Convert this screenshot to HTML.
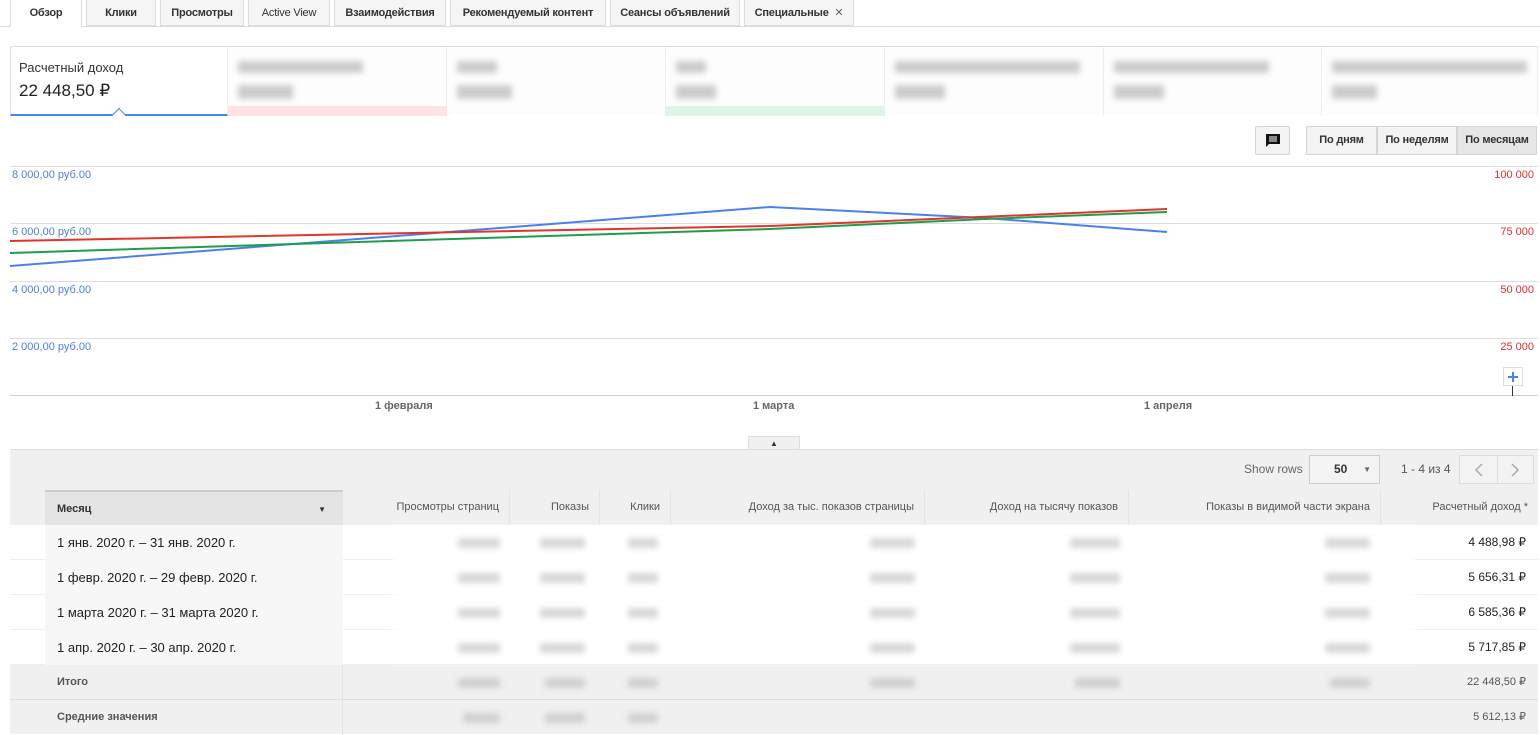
<!DOCTYPE html>
<html><head><meta charset="utf-8"><style>
*{box-sizing:border-box;margin:0;padding:0}
body{width:1540px;height:734px;overflow:hidden;background:#fff;font-family:"Liberation Sans",sans-serif;color:#333;position:relative}
.a{position:absolute}
.tab{position:absolute;top:0;height:26px;border:1px solid #ddd;border-top:none;background:#f5f5f5;font-size:11px;font-weight:bold;line-height:26px;text-align:center;color:#333;white-space:nowrap;overflow:hidden;letter-spacing:-0.2px}
.card{position:absolute;top:46px;height:70px;border-top:1px solid #ddd;border-right:1px solid #eee;background:#fdfdfd}
.blur{position:absolute;background:#ccc;filter:blur(3px);border-radius:2px}
.gl{position:absolute;left:10px;width:1528px;height:1px;background:#ddd}
.yl{position:absolute;left:12px;font-size:11px;color:#4a7ee8}
.yr{position:absolute;right:6px;font-size:11px;color:#e0302a}
.xl{position:absolute;top:400px;font-size:11px;font-weight:bold;color:#666}
.btn{position:absolute;top:126px;height:29px;border:1px solid #d5d5d5;background:#f3f3f3;font-size:11px;font-weight:bold;line-height:27px;text-align:center;color:#333;letter-spacing:-0.2px}
.th{position:absolute;top:490px;height:35px;font-size:11px;color:#555;line-height:35px;text-align:right;padding-right:10px;border-right:1px solid #e4e4e4;background:#f0f0f0;white-space:nowrap}
.row{position:absolute;left:10px;width:1528px;height:35px;border-bottom:1px solid #eee}
.m{position:absolute;left:45px;width:298px;height:35px;background:#f7f7f7;padding-left:12px;line-height:35px;font-size:13px;color:#222}
.v{position:absolute;right:12px;font-size:12px;line-height:35px;color:#222}
</style></head><body>
<div class="a" style="left:0;top:26px;width:1540px;height:1px;background:#ddd"></div>
<div class="tab" style="left:10px;width:72px;background:#fff;height:27px;border-bottom:none">Обзор</div>
<div class="tab" style="left:86px;width:70px">Клики</div>
<div class="tab" style="left:160px;width:84px">Просмотры</div>
<div class="tab" style="left:248px;width:82px;font-weight:normal">Active View</div>
<div class="tab" style="left:334px;width:112px">Взаимодействия</div>
<div class="tab" style="left:450px;width:156px">Рекомендуемый контент</div>
<div class="tab" style="left:610px;width:130px">Сеансы объявлений</div>
<div class="tab" style="left:744px;width:110px">Специальные &nbsp;<span style="font-weight:normal;color:#666">✕</span></div>
<div class="card" style="left:10px;width:218px;background:#fff;border-left:1px solid #ddd;border-bottom:2px solid #4285f4">
<div class="a" style="left:8px;top:13px;font-size:13px;color:#333">Расчетный доход</div>
<div class="a" style="left:8px;top:34px;font-size:17px;color:#222">22 448,50 ₽</div>
<div class="a" style="left:103px;top:63px;width:10px;height:10px;background:#fff;border-left:1.5px solid #4285f4;border-top:1.5px solid #4285f4;transform:rotate(45deg)"></div>
</div>
<div class="card" style="left:228px;width:219px"><div class="blur" style="left:10px;top:14px;width:125px;height:12px"></div><div class="blur" style="left:10px;top:38px;width:55px;height:14px"></div><div class="a" style="left:0;bottom:0;width:219px;height:10px;background:#fde3e3"></div></div>
<div class="card" style="left:447px;width:219px"><div class="blur" style="left:10px;top:14px;width:40px;height:12px"></div><div class="blur" style="left:10px;top:38px;width:55px;height:14px"></div></div>
<div class="card" style="left:666px;width:219px"><div class="blur" style="left:10px;top:14px;width:30px;height:12px"></div><div class="blur" style="left:10px;top:38px;width:40px;height:14px"></div><div class="a" style="left:0;bottom:0;width:219px;height:10px;background:#def5e6"></div></div>
<div class="card" style="left:885px;width:219px"><div class="blur" style="left:10px;top:14px;width:185px;height:12px"></div><div class="blur" style="left:10px;top:38px;width:50px;height:14px"></div></div>
<div class="card" style="left:1104px;width:218px"><div class="blur" style="left:10px;top:14px;width:155px;height:12px"></div><div class="blur" style="left:10px;top:38px;width:50px;height:14px"></div></div>
<div class="card" style="left:1322px;width:216px"><div class="blur" style="left:10px;top:14px;width:195px;height:12px"></div><div class="blur" style="left:10px;top:38px;width:45px;height:14px"></div></div>
<div class="btn" style="left:1255px;width:35px;border-radius:2px"><svg width="16" height="16" viewBox="0 0 16 16" style="margin-top:6px"><path d="M1 1h14v10H4l-3 3z" fill="#111"/><path d="M4 4h8M4 6h8M4 8h8" stroke="#fff" stroke-width="1"/></svg></div>
<div class="btn" style="left:1306px;width:71px">По дням</div>
<div class="btn" style="left:1377px;width:80px">По неделям</div>
<div class="btn" style="left:1457px;width:80px;background:#e6e6e6">По месяцам</div>
<div class="gl" style="top:166px"></div><div class="gl" style="top:223px"></div><div class="gl" style="top:281px"></div><div class="gl" style="top:338px"></div><div class="gl" style="top:395px;background:#ccc"></div>
<div class="yl" style="top:169px">8 000,00 руб.00</div><div class="yl" style="top:226px">6 000,00 руб.00</div><div class="yl" style="top:284px">4 000,00 руб.00</div><div class="yl" style="top:341px">2 000,00 руб.00</div>
<div class="yr" style="top:169px">100 000</div><div class="yr" style="top:226px">75 000</div><div class="yr" style="top:284px">50 000</div><div class="yr" style="top:341px">25 000</div>
<svg class="a" style="left:0;top:0" width="1540" height="420">
<polyline points="10,266 770,207 985,218 1167,232" fill="none" stroke="#4a80ee" stroke-width="2"/>
<polyline points="10,253 770,229 985,219 1167,212" fill="none" stroke="#1e9e4a" stroke-width="2"/>
<polyline points="10,241 770,226 1167,209" fill="none" stroke="#e0352b" stroke-width="2"/>
<rect x="1503.5" y="367.5" width="19" height="18" fill="#fff" stroke="#ddd"/>
<path d="M1513 372v10M1508 377h10" stroke="#4a80ee" stroke-width="2"/>
<line x1="1512.5" y1="386" x2="1512.5" y2="396" stroke="#333"/>
</svg>
<div class="xl" style="left:375px">1 февраля</div><div class="xl" style="left:753px">1 марта</div><div class="xl" style="left:1144px">1 апреля</div>
<div class="a" style="left:748px;top:436px;width:52px;height:14px;background:#f0f0f0;border:1px solid #ddd;border-bottom:none;text-align:center;font-size:8px;line-height:13px">▲</div>
<div class="a" style="left:10px;top:449px;width:1528px;height:285px;background:#f0f0f0;border-top:1px solid #ddd"></div>
<div class="a" style="left:1244px;top:462px;font-size:12px;color:#666">Show rows</div>
<div class="a" style="left:1309px;top:455px;width:71px;height:29px;border:1px solid #ccc;background:#f3f3f3;font-size:12px;font-weight:bold;line-height:27px;padding-left:24px">50<span style="position:absolute;right:8px;font-size:8px;color:#666">▼</span></div>
<div class="a" style="left:1401px;top:462px;font-size:12px;color:#555">1 - 4 из 4</div>
<div class="a" style="left:1459px;top:455px;width:75px;height:29px;border:1px solid #ddd;background:#f3f3f3"><div class="a" style="left:37px;top:0;width:1px;height:27px;background:#ddd"></div><svg class="a" style="left:0;top:0" width="75" height="28"><path d="M22 8l-6 6 6 6M52 8l6 6-6 6" fill="none" stroke="#aaa" stroke-width="1.5"/></svg></div>
<div class="th" style="left:10px;width:35px;border:none"></div>
<div class="th" style="left:45px;width:298px;text-align:left;padding-left:12px;background:#e4e4e4;border-top:2px solid #ccc;font-weight:bold;color:#333">Месяц<span style="position:absolute;right:16px;font-size:8px">▼</span></div>
<div class="th" style="left:343px;width:167px">Просмотры страниц</div>
<div class="th" style="left:510px;width:90px">Показы</div>
<div class="th" style="left:600px;width:71px">Клики</div>
<div class="th" style="left:671px;width:254px">Доход за тыс. показов страницы</div>
<div class="th" style="left:925px;width:204px">Доход на тысячу показов</div>
<div class="th" style="left:1129px;width:252px">Показы в видимой части экрана</div>
<div class="th" style="left:1381px;width:157px;border:none">Расчетный доход *</div>
<div class="row" style="top:525px;background:#fff"><div class="m" style="left:35px">1 янв. 2020 г. – 31 янв. 2020 г.</div><div class="v">4 488,98 ₽</div></div>
<div class="row" style="top:560px;background:#fff"><div class="m" style="left:35px">1 февр. 2020 г. – 29 февр. 2020 г.</div><div class="v">5 656,31 ₽</div></div>
<div class="row" style="top:595px;background:#fff"><div class="m" style="left:35px">1 марта 2020 г. – 31 марта 2020 г.</div><div class="v">6 585,36 ₽</div></div>
<div class="row" style="top:630px;background:#fff"><div class="m" style="left:35px">1 апр. 2020 г. – 30 апр. 2020 г.</div><div class="v">5 717,85 ₽</div></div>
<div class="row" style="top:665px;border-bottom:1px solid #ddd"><div class="m" style="left:35px;background:none;font-size:11px;font-weight:bold;color:#555;border-right:1px solid #e4e4e4">Итого</div><div class="v" style="font-size:11px;color:#555">22 448,50 ₽</div></div>
<div class="row" style="top:700px;border:none"><div class="m" style="left:35px;background:none;font-size:11px;font-weight:bold;color:#555;border-right:1px solid #e4e4e4">Средние значения</div><div class="v" style="font-size:11px;color:#555">5 612,13 ₽</div></div>
<div class="a" style="left:393px;top:527px;width:1022px;height:136px;background:#fff;filter:blur(3px)"></div>
<div class="blur" style="left:458px;top:538px;width:42px;height:10px;background:#d8d8d8"></div>
<div class="blur" style="left:540px;top:538px;width:45px;height:10px;background:#d8d8d8"></div>
<div class="blur" style="left:628px;top:538px;width:30px;height:10px;background:#d8d8d8"></div>
<div class="blur" style="left:870px;top:538px;width:45px;height:10px;background:#d8d8d8"></div>
<div class="blur" style="left:1070px;top:538px;width:50px;height:10px;background:#d8d8d8"></div>
<div class="blur" style="left:1325px;top:538px;width:45px;height:10px;background:#d8d8d8"></div>
<div class="blur" style="left:458px;top:573px;width:42px;height:10px;background:#d8d8d8"></div><div class="blur" style="left:540px;top:573px;width:45px;height:10px;background:#d8d8d8"></div><div class="blur" style="left:628px;top:573px;width:30px;height:10px;background:#d8d8d8"></div><div class="blur" style="left:870px;top:573px;width:45px;height:10px;background:#d8d8d8"></div><div class="blur" style="left:1070px;top:573px;width:50px;height:10px;background:#d8d8d8"></div><div class="blur" style="left:1325px;top:573px;width:45px;height:10px;background:#d8d8d8"></div>
<div class="blur" style="left:458px;top:608px;width:42px;height:10px;background:#d8d8d8"></div><div class="blur" style="left:540px;top:608px;width:45px;height:10px;background:#d8d8d8"></div><div class="blur" style="left:628px;top:608px;width:30px;height:10px;background:#d8d8d8"></div><div class="blur" style="left:870px;top:608px;width:45px;height:10px;background:#d8d8d8"></div><div class="blur" style="left:1070px;top:608px;width:50px;height:10px;background:#d8d8d8"></div><div class="blur" style="left:1325px;top:608px;width:45px;height:10px;background:#d8d8d8"></div>
<div class="blur" style="left:458px;top:643px;width:42px;height:10px;background:#d8d8d8"></div><div class="blur" style="left:540px;top:643px;width:45px;height:10px;background:#d8d8d8"></div><div class="blur" style="left:628px;top:643px;width:30px;height:10px;background:#d8d8d8"></div><div class="blur" style="left:870px;top:643px;width:45px;height:10px;background:#d8d8d8"></div><div class="blur" style="left:1070px;top:643px;width:50px;height:10px;background:#d8d8d8"></div><div class="blur" style="left:1325px;top:643px;width:45px;height:10px;background:#d8d8d8"></div>
<div class="blur" style="left:458px;top:678px;width:42px;height:10px;background:#d0d0d0"></div><div class="blur" style="left:545px;top:678px;width:40px;height:10px;background:#d0d0d0"></div><div class="blur" style="left:628px;top:678px;width:30px;height:10px;background:#d0d0d0"></div><div class="blur" style="left:870px;top:678px;width:45px;height:10px;background:#d0d0d0"></div><div class="blur" style="left:1075px;top:678px;width:45px;height:10px;background:#d0d0d0"></div><div class="blur" style="left:1330px;top:678px;width:40px;height:10px;background:#d0d0d0"></div>
<div class="blur" style="left:463px;top:713px;width:37px;height:10px;background:#d0d0d0"></div><div class="blur" style="left:545px;top:713px;width:40px;height:10px;background:#d0d0d0"></div><div class="blur" style="left:628px;top:713px;width:30px;height:10px;background:#d0d0d0"></div>
</body></html>
